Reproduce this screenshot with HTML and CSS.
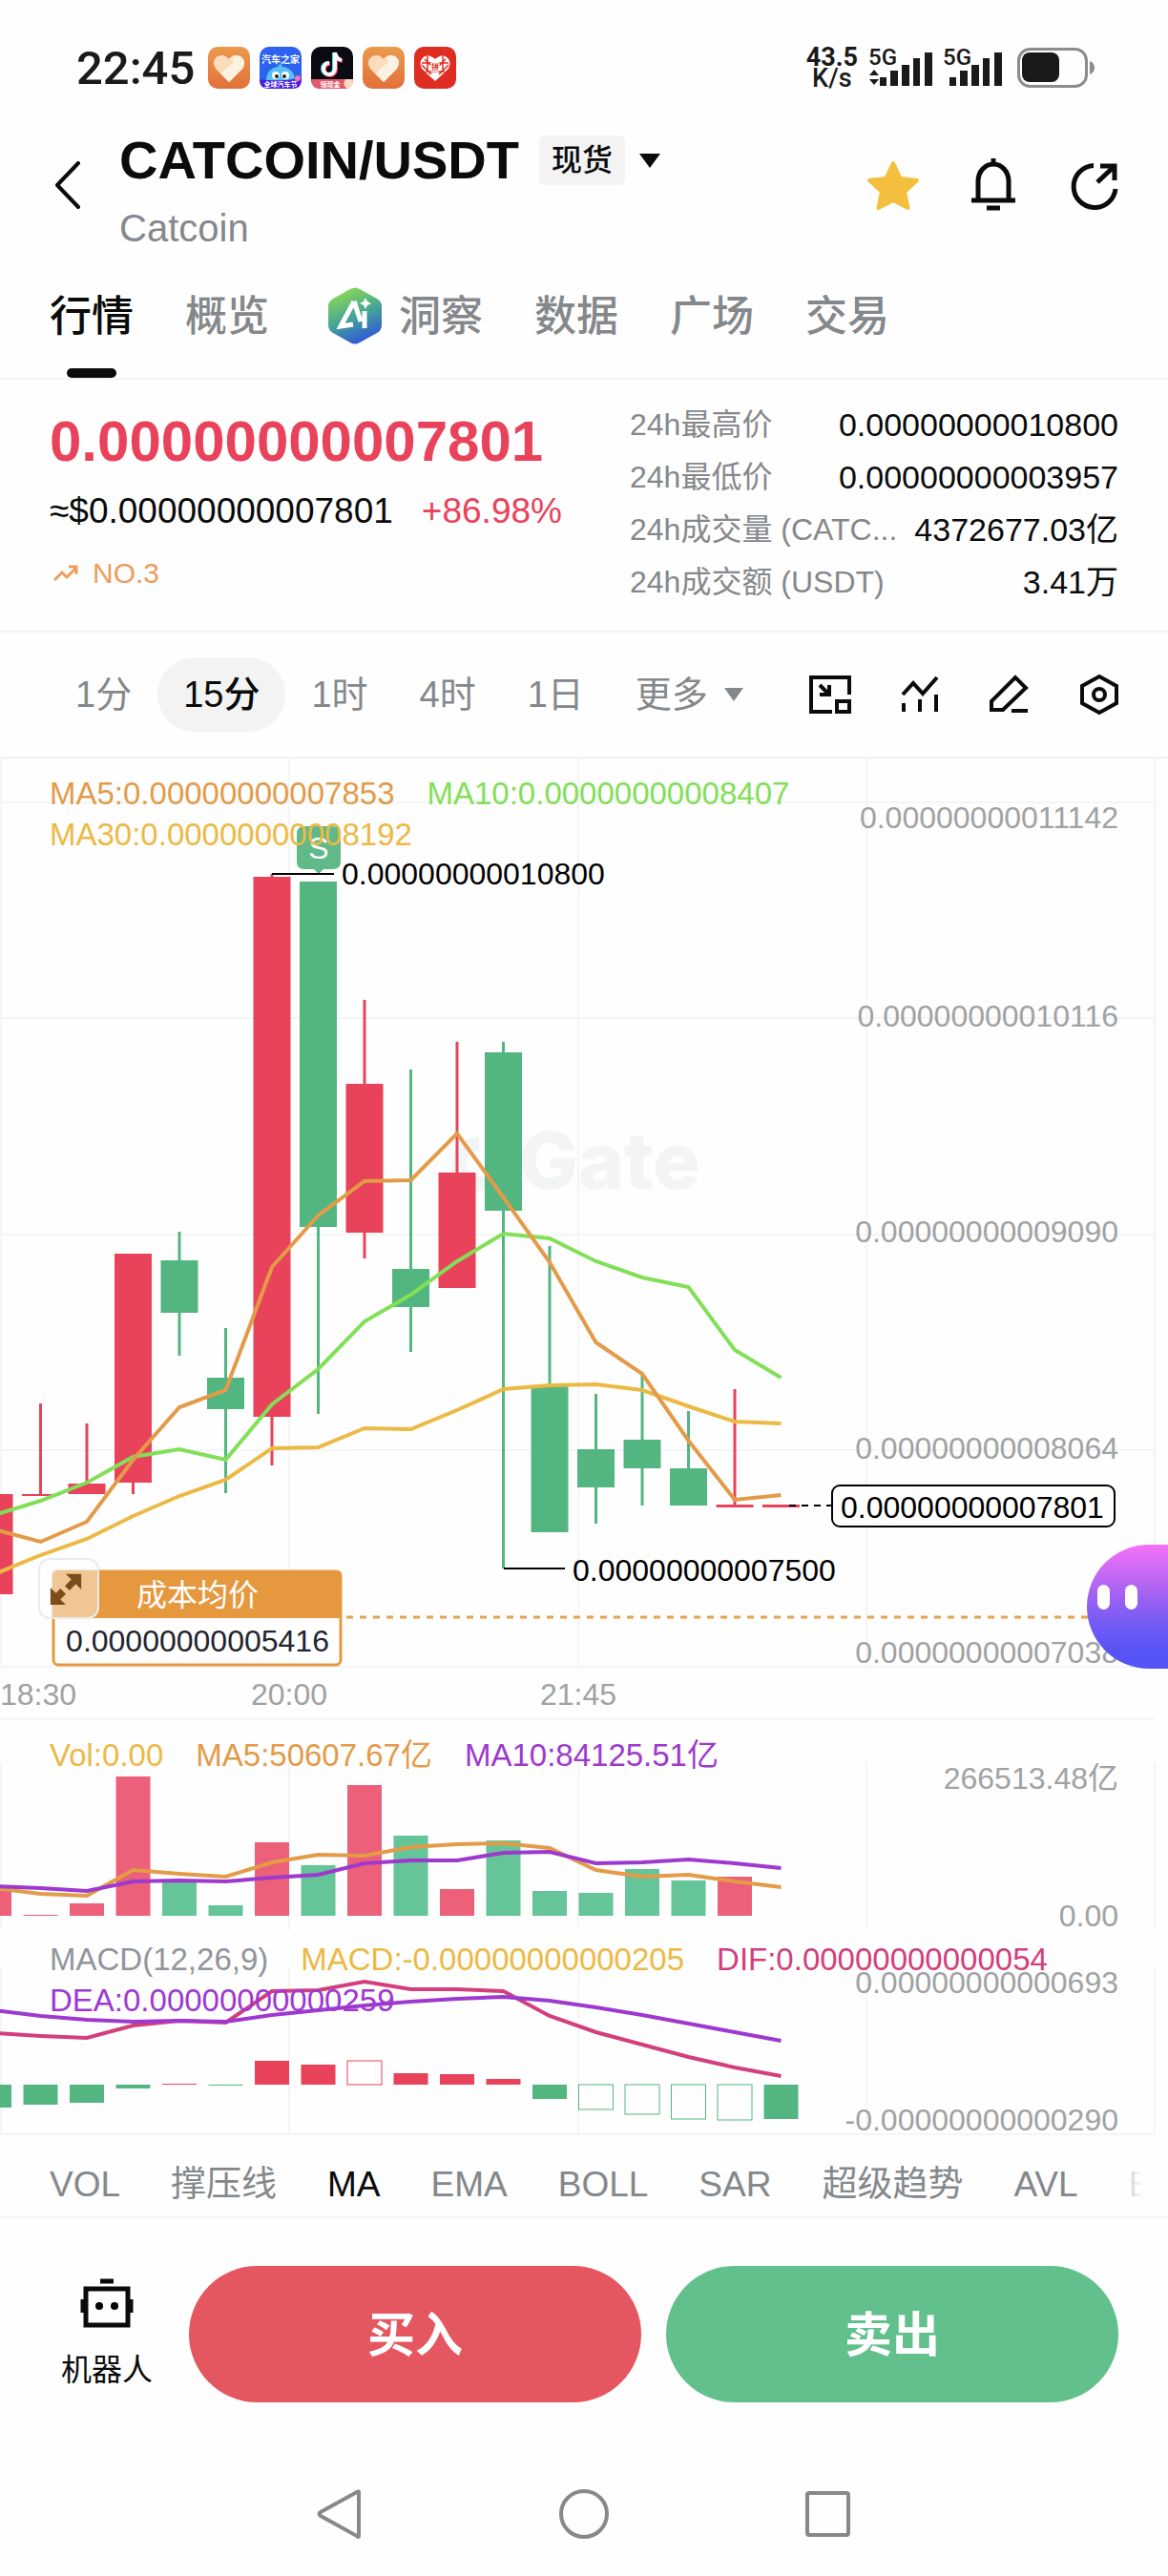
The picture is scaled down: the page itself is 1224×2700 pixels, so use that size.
FILE: index.html
```html
<!DOCTYPE html>
<html lang="zh-CN">
<head>
    <meta charset="UTF-8">
    <meta name="viewport" content="width=device-width, initial-scale=1.0">
    <title>CATCOIN/USDT</title>
    <link rel="stylesheet" href="styles.css">
</head>
<body>

<div class="status-bar">
    <span class="time">22:45</span>
    <div class="app-icons">
        <svg viewBox="0 0 44 44"><use href="#app-heart"/></svg>
        <svg viewBox="0 0 44 44">
            <rect width="44" height="44" rx="10" fill="#2b62ee"/>
            <text x="22" y="17" font-size="10" font-weight="bold" fill="#fff" text-anchor="middle">汽车之家</text>
            <path d="M7 35c0-9 6-13 12-14l3-4 2 4c8 1 13 6 13 14z" fill="#58c0f4"/>
            <circle cx="17" cy="30" r="4" fill="#fff"/><circle cx="27" cy="30" r="4" fill="#fff"/>
            <circle cx="18" cy="31" r="2" fill="#222"/><circle cx="26" cy="31" r="2" fill="#222"/>
            <path d="M0 34q22 4 44-2v3q0 9-10 9H10q-10 0-10-9z" fill="#4a1ee0"/>
            <circle cx="40" cy="33" r="3" fill="#f07aa8"/>
            <text x="22" y="42" font-size="7" font-weight="bold" fill="#fff" text-anchor="middle">全球汽车节</text>
        </svg>
        <svg viewBox="0 0 44 44">
            <rect width="44" height="44" rx="10" fill="#0b0b14"/>
            <g fill="none" stroke-width="4">
                <path d="M24 6v17a6 6 0 1 1-6-6M24 6q1 7 7 8" stroke="#3ce5e3"/>
                <path d="M26 7v17a6 6 0 1 1-6-6M26 7q1 7 7 8" stroke="#f0355c"/>
                <path d="M25 6v17a6 6 0 1 1-6-6M25 6q1 7 7 8" stroke="#fff"/>
            </g>
            <path d="M0 34h44q0 10-10 10H10Q0 44 0 34z" fill="#e2596a"/>
            <path d="M36 34h8q0 8-6 10-6-4-2-10z" fill="#fbd9c0"/>
            <text x="20" y="42" font-size="7" font-weight="bold" fill="#fff" text-anchor="middle">领现金</text>
        </svg>
        <svg viewBox="0 0 44 44"><use href="#app-heart"/></svg>
        <svg viewBox="0 0 44 44">
            <rect width="44" height="44" rx="10" fill="#df2d22"/>
            <path d="M22 36 8 23q-4-8 3-13 6-2 11 3 5-5 11-3 7 5 3 13z" fill="#fff"/>
            <path d="M11 13l9 9M8 19l10 10M33 13l-9 9M36 19 26 29M14 10v16M30 10v16M8 17h28M12 26h20" stroke="#df2d22" stroke-width="1.5"/>
            <text x="22" y="24" font-size="8" font-weight="bold" fill="#df2d22" stroke="#fff" stroke-width="2" paint-order="stroke" text-anchor="middle">拼</text>
        </svg>
    </div>
    <div class="speed"><b>43.5</b><span>K/s</span></div>
    <svg class="signal" viewBox="0 0 68 44">
        <text x="0" y="19">5G</text>
        <path d="M6 24l5 6H1zM6 40l5-6H1z"/>
        <path d="M12 32h7v9h-7zM23 25h8v16h-8zM35 19h8v22h-8zM47 12h7v29h-7zM59 6h8v35h-8z"/>
    </svg>
    <svg class="signal" viewBox="0 0 68 44">
        <text x="0" y="19">5G</text>
        <path d="M7 32h7v9H7zM18 25h8v16h-8zM30 19h8v22h-8zM42 12h7v29h-7zM54 6h8v35h-8z"/>
    </svg>
    <svg class="battery" viewBox="0 0 82 42">
        <rect x="1.5" y="1.5" width="71" height="39" rx="12" fill="none" stroke="#8c8c8c" stroke-width="3"/>
        <rect x="5" y="5" width="39" height="31" rx="8" fill="#1a1a1a"/>
        <path d="M76 14q5 2 5 7t-5 7z" fill="#8c8c8c"/>
    </svg>
</div>

<header class="header">
    <button class="back" aria-label="返回">
        <svg viewBox="0 0 28 50"><path d="M25 2 3 25l22 23" fill="none" stroke="#0a0b0b" stroke-width="4" stroke-linecap="round" stroke-linejoin="round"/></svg>
    </button>
    <div class="pair">
        <div class="pair-row">
            <h1>CATCOIN/USDT</h1>
            <span class="tag">现货</span>
            <svg class="caret" viewBox="0 0 22 15"><path d="M0 0h22L11 15z" fill="#0a0b0b"/></svg>
        </div>
        <p>Catcoin</p>
    </div>
    <div class="header-actions">
        <button aria-label="收藏">
            <svg viewBox="0 0 56 56"><path d="M28 5l7.500 16 17.500 2-13 12 3.500 17L28 44 12.500 52l3.500-17L3 23l17.500-2z" fill="#f4bf3e" stroke="#f4bf3e" stroke-width="4" stroke-linejoin="round"/></svg>
        </button>
        <button aria-label="提醒">
            <svg viewBox="0 0 56 56"><path d="M28 0v6M5 44h46M12 44V24a16 18 0 0 1 32 0v20M21 52h14" fill="none" stroke="#0a0b0b" stroke-width="5"/></svg>
        </button>
        <button aria-label="分享">
            <svg viewBox="0 0 56 56"><path d="M28 7.500A22 22 0 1 0 51 32M32 25 50 8M35 8h15v15" fill="none" stroke="#0a0b0b" stroke-width="5"/></svg>
        </button>
    </div>
</header>

<nav class="tabs">
    <a href="#" class="active">行情</a>
    <a href="#">概览</a>
    <a href="#" class="ai">
        <svg viewBox="0 0 56 60">
            <path d="M23 2q5-3 10 0l18 10q5 3 5 8v20q0 5-5 8L33 58q-5 3-10 0L5 48q-5-3-5-8V20q0-5 5-8z" fill="url(#ai-fill)"/>
            <path d="M27 15 13 41l13-2M27 15l7 21M27 15l2 4M38 25v18" fill="none" stroke="#fff" stroke-width="5"/>
            <path d="M39 11l2 4 4 2-4 2-2 4-2-4-4-2 4-2z" fill="#fff"/>
        </svg>
        洞察
    </a>
    <a href="#">数据</a>
    <a href="#">广场</a>
    <a href="#">交易</a>
</nav>

<section class="summary">
    <div class="price">
        <div class="last">0.00000000007801</div>
        <div class="fiat"><span>≈$0.00000000007801</span><span class="change">+86.98%</span></div>
        <div class="rank">
            <svg viewBox="0 0 26 18"><path d="M1 16l8-8 5 5L24 3M16 2h8v8" fill="none" stroke="#eb9d5b" stroke-width="3"/></svg>
            NO.3
        </div>
    </div>
    <dl class="stats">
        <div><dt>24h最高价</dt><dd>0.00000000010800</dd></div>
        <div><dt>24h最低价</dt><dd>0.00000000003957</dd></div>
        <div><dt>24h成交量 (CATC...</dt><dd>4372677.03亿</dd></div>
        <div><dt>24h成交额 (USDT)</dt><dd>3.41万</dd></div>
    </dl>
</section>

<div class="intervals">
    <button>1分</button>
    <button class="active">15分</button>
    <button>1时</button>
    <button>4时</button>
    <button>1日</button>
    <button class="more">更多 <svg viewBox="0 0 20 14"><path d="M0 0h20L10 14z" fill="#85888b"/></svg></button>
    <div class="tools">
        <button aria-label="小窗"><svg viewBox="0 0 44 44"><path d="M24 40H2V4h40v18M11 12l9 9M21 12v10H11M29 29h13v11H29z"/></svg></button>
        <button aria-label="指标"><svg viewBox="0 0 44 44"><path d="M4 22l11-12 10 11L40 4M5 31v9M22 27v13M39 22v18"/></svg></button>
        <button aria-label="画线"><svg viewBox="0 0 44 44"><path d="M3 38V29L28 4l11 11-24 23zM24 39h17"/></svg></button>
        <button aria-label="设置"><svg viewBox="0 0 44 44"><path d="M22 3l18 10v18L22 41 4 31V13z"/><circle cx="22" cy="22" r="6"/></svg></button>
    </div>
</div>

<main>
    <section class="panel">
        <svg id="kline" viewBox="0 0 1224 1008">
            <path class="grid" d="M0 46h1210M0 272h1210M0 499h1210M0 725h1210M0 952h1210M0 1007h1210M1 0v952M303 0v952M606 0v952M908 0v952M1210 0v952"/>
            <g class="watermark">
                <path d="M502 404a21 21 0 1 0 21 21" fill="none" stroke-width="15"/>
                <path d="M510 397h20v20h-20z" stroke="none"/>
                <text x="544" y="451">Gate</text>
            </g>
            <g id="candles"></g>
            <g id="kline-ma"></g>
            <g class="axis">
                <text x="1172" y="73">0.00000000011142</text>
                <text x="1172" y="281">0.00000000010116</text>
                <text x="1172" y="507">0.00000000009090</text>
                <text x="1172" y="734">0.00000000008064</text>
                <text x="1172" y="948">0.00000000007038</text>
            </g>
            <g class="axis times">
                <text x="40" y="992">18:30</text>
                <text x="303" y="992">20:00</text>
                <text x="606" y="992">21:45</text>
            </g>

            <!-- Höchst- und Tiefstkurs -->
            <g class="sell-mark">
                <path d="M319 71h30q8 0 8 8v29q0 8-8 8h-10l-5 5-5-5h-10q-8 0-8-8V79q0-8 8-8z"/>
                <text x="334" y="105">S</text>
            </g>
            <path class="pointer" d="M285 121h65M528 849h64"/>
            <text x="358" y="132">0.00000000010800</text>
            <text x="600" y="862">0.00000000007500</text>

            <!-- aktueller Kurs -->
            <path class="pointer" d="M827 783h45" stroke-dasharray="7 6"/>
            <rect x="872" y="762" width="296" height="43" rx="8" fill="#fff" stroke="#000" stroke-width="2"/>
            <text x="881" y="796">0.00000000007801</text>

            <!-- Durchschnittskosten -->
            <path d="M363 900h790" stroke="#e3a154" stroke-width="3" stroke-dasharray="7 7"/>
            <rect x="56" y="852" width="301" height="98" rx="5" fill="#fff" stroke="#e6983f" stroke-width="3"/>
            <path d="M55 901v-45q0-5 5-5h293q5 0 5 5v45z" fill="#e6983f"/>
            <text class="cost-title" x="207" y="888">成本均价</text>
            <text class="cost-value" x="207" y="936">0.00000000005416</text>
        </svg>
        <div class="legend">
            <span class="orange">MA5:0.00000000007853</span>
            <span class="green">MA10:0.00000000008407</span>
            <span class="yellow">MA30:0.00000000008192</span>
        </div>
        <button class="expand" aria-label="全屏">
            <svg viewBox="0 0 40 40"><path d="M20 4h17v17l-6-6-7 7-5-5 7-7zM3 19l6 6 5-5 6 6-6 6 6 6H3z" fill="#7a4d1a"/></svg>
        </button>
        <button class="assistant" aria-label="助手"><i></i><i></i></button>
    </section>

    <section class="panel">
        <svg id="volume" viewBox="0 0 1224 220">
            <path class="grid" d="M1 45v175M303 45v175M606 45v175M908 45v175M1210 45v175"/>
            <g id="vol-bars"></g>
            <g id="vol-ma"></g>
            <g class="axis">
                <text x="1172" y="72">266513.48亿</text>
                <text x="1172" y="216">0.00</text>
            </g>
        </svg>
        <div class="legend">
            <span class="yellow">Vol:0.00</span>
            <span class="orange">MA5:50607.67亿</span>
            <span class="purple">MA10:84125.51亿</span>
        </div>
    </section>

    <section class="panel macd">
        <svg id="macd" viewBox="0 0 1224 215">
            <path class="grid" d="M0 214h1210M1 39v175M303 39v175M606 39v175M908 39v175M1210 39v175"/>
            <g id="macd-bars"></g>
            <g id="macd-lines"></g>
            <g class="axis">
                <text x="1172" y="66">0.00000000000693</text>
                <text x="1172" y="210">-0.00000000000290</text>
            </g>
        </svg>
        <div class="legend">
            <span class="gray">MACD(12,26,9)</span>
            <span class="yellow">MACD:-0.00000000000205</span>
            <span class="pink">DIF:0.00000000000054</span>
            <span class="purple">DEA:0.00000000000259</span>
        </div>
    </section>
</main>

<div class="indicators">
    <button>VOL</button>
    <button>撑压线</button>
    <button class="active">MA</button>
    <button>EMA</button>
    <button>BOLL</button>
    <button>SAR</button>
    <button>超级趋势</button>
    <button>AVL</button>
    <button>E</button>
</div>

<footer class="actions">
    <button class="robot">
        <svg viewBox="0 0 56 52"><path d="M21 3h14M6 11h44v38H6zM3 22v14M53 22v14" fill="none" stroke="#0a0b0b" stroke-width="5"/><circle cx="20" cy="29" r="4"/><circle cx="36" cy="29" r="4"/></svg>
        机器人
    </button>
    <button class="buy">买入</button>
    <button class="sell">卖出</button>
</footer>

<div class="system-nav">
    <button aria-label="返回"><svg viewBox="0 0 52 52"><path d="M45 3v46q0 2-2 0L5 28q-3-2 0-4L43 3q2-1 2 0z"/></svg></button>
    <button aria-label="主屏幕"><svg viewBox="0 0 52 52"><circle cx="26" cy="26" r="24"/></svg></button>
    <button aria-label="最近任务"><svg viewBox="0 0 52 52"><rect x="5" y="4" width="43" height="44" rx="2"/></svg></button>
</div>

<svg class="defs" width="0" height="0">
    <defs>
        <linearGradient id="heart-bg" x1="0" y1="0" x2="0" y2="1"><stop offset="0" stop-color="#eb9a4c"/><stop offset="1" stop-color="#e2703a"/></linearGradient>
        <linearGradient id="ai-fill" x1="0.300" y1="0" x2="0.700" y2="1"><stop offset="0" stop-color="#8fdc50"/><stop offset="0.500" stop-color="#45a596"/><stop offset="1" stop-color="#2c50e0"/></linearGradient>
        <symbol id="app-heart" viewBox="0 0 44 44">
            <rect width="44" height="44" rx="10" fill="url(#heart-bg)"/>
            <path d="M22 37 8 23q-5-8 2-13 7-3 12 3 5-6 12-3 7 5 2 13z" fill="#fbdcbc"/>
            <path d="M22 37 13 28 26 17q3-6-4-4 5-6 12-3 7 5 2 13z" fill="#fdf1e2"/>
        </symbol>
    </defs>
</svg>

<script src="script.js"></script>
</body>
</html>
```
FILE: styles.css
```css
* {
    box-sizing: border-box;
}

body {
    margin: 0;
    background: #fefefe;
    color: #0a0b0b;
    font-family: "Liberation Sans", "Noto Sans CJK SC", sans-serif;
}

button {
    margin: 0;
    padding: 0;
    border: 0;
    background: none;
    color: inherit;
    font: inherit;
    cursor: pointer;
}

svg {
    display: block;
}

.defs {
    position: absolute;
}

/* Statusleiste */
.status-bar {
    display: flex;
    align-items: center;
    height: 142px;
    padding: 0 76px 0 80px;
    font-family: Roboto, "Noto Sans CJK SC", sans-serif;
    color: #1a1a1a;
}

.time {
    font-size: 49px;
    font-weight: 500;
}

.app-icons {
    display: flex;
    gap: 10px;
    margin-left: 14px;
}

.app-icons svg {
    width: 44px;
    height: 44px;
}

.speed {
    display: flex;
    flex-direction: column;
    align-items: center;
    margin-left: auto;
    margin-right: 11px;
    font-size: 27px;
    line-height: 22px;
    font-weight: 500;
}

.signal {
    width: 68px;
    height: 44px;
    margin-right: 10px;
    overflow: visible;
    fill: #1a1a1a;
}

.signal text {
    font-size: 24px;
    font-weight: 500;
}

.battery {
    width: 82px;
    height: 42px;
}

/* Kopfzeile */
.header {
    display: flex;
    align-items: flex-start;
    padding: 0 50px 0 52px;
}

.back {
    margin: 27px 40px 0 5px;
}

.back svg {
    width: 28px;
    height: 50px;
}

.pair-row {
    display: flex;
    align-items: center;
    height: 52px;
}

.pair h1 {
    margin: 0;
    font-size: 56px;
    line-height: 52px;
}

.tag {
    margin-left: 21px;
    padding: 0 13px;
    border-radius: 6px;
    background: #f3f3f4;
    font-size: 32px;
    font-weight: 500;
    line-height: 52px;
}

.caret {
    width: 22px;
    height: 15px;
    margin-left: 15px;
}

.pair p {
    margin: 23px 0 0;
    color: #85888b;
    font-size: 40px;
    line-height: 44px;
}

.header-actions {
    display: flex;
    gap: 49px;
    margin: 24px 0 0 auto;
}

.header-actions svg {
    width: 56px;
    height: 56px;
}

/* Reiter */
.tabs {
    display: flex;
    gap: 54px;
    padding: 40px 52px 35px;
    border-bottom: 2px solid #f1f2f3;
}

.tabs a {
    display: flex;
    position: relative;
    height: 60px;
    color: #85888b;
    font-size: 44px;
    font-weight: 500;
    line-height: 62px;
    text-decoration: none;
}

.tabs .active {
    color: #0a0b0b;
}

.tabs .active::after {
    content: "";
    position: absolute;
    left: 18px;
    bottom: -35px;
    width: 52px;
    height: 10px;
    border-radius: 5px;
    background: #0a0b0b;
}

.tabs .ai {
    gap: 18px;
    padding-left: 8px;
}

.ai svg {
    width: 56px;
    height: 60px;
}

/* Kursübersicht */
.summary {
    display: grid;
    grid-template-columns: 1fr 512px;
    padding: 20px 52px 23px;
    border-bottom: 2px solid #f1f2f3;
}

.price {
    padding-top: 9px;
}

.last {
    color: #e9435b;
    font-size: 60px;
    font-weight: bold;
    line-height: 72px;
}

.fiat {
    display: flex;
    gap: 30px;
    margin-top: 11px;
    font-size: 37px;
    line-height: 52px;
}

.change {
    color: #e9435b;
}

.rank {
    display: flex;
    align-items: center;
    gap: 15px;
    margin-top: 19px;
    padding-left: 4px;
    color: #eb9d5b;
    font-size: 30px;
    line-height: 40px;
}

.rank svg {
    width: 26px;
    height: 18px;
}

.stats {
    margin: 0;
}

.stats div {
    display: flex;
    justify-content: space-between;
    font-size: 32px;
    line-height: 55px;
    white-space: nowrap;
}

.stats dt {
    color: #85888b;
}

.stats dd {
    margin: 0;
    font-size: 34px;
}

/* Zeitintervalle */
.intervals {
    display: flex;
    align-items: center;
    height: 132px;
    padding: 0 50px 0 52px;
    border-bottom: 2px solid #f1f2f3;
    color: #85888b;
    font-size: 38px;
}

.intervals > button {
    padding: 0 27px;
    line-height: 78px;
}

.intervals .active {
    border-radius: 39px;
    background: #f3f3f4;
    color: #0a0b0b;
    font-weight: 500;
}

.intervals .more {
    display: flex;
    align-items: center;
    gap: 17px;
}

.more svg {
    width: 20px;
    height: 14px;
}

.tools {
    display: flex;
    gap: 50px;
    margin-left: auto;
}

.tools svg {
    width: 44px;
    height: 44px;
    fill: none;
    stroke: #0a0b0b;
    stroke-width: 4;
}

/* Diagramme */
.panel {
    position: relative;
    overflow: hidden;
}

.panel > svg {
    width: 100%;
    height: auto;
    font-size: 32px;
}

.legend {
    position: absolute;
    top: 15px;
    left: 0;
    right: 0;
    display: flex;
    flex-wrap: wrap;
    column-gap: 34px;
    padding: 0 52px;
    font-size: 33px;
    line-height: 43px;
    pointer-events: none;
}

.macd .legend {
    top: 9px;
}

.orange { color: #e39b48; }
.green { color: #82df57; }
.yellow { color: #ecb944; }
.purple { color: #9e39cf; }
.pink { color: #d23f7c; }
.gray { color: #90959c; }

.grid {
    fill: none;
    stroke: #f3f5f6;
    stroke-width: 2;
}

.axis {
    fill: #a0a2a3;
    text-anchor: end;
}

.times {
    text-anchor: middle;
}

.watermark {
    fill: #f3f4f5;
    stroke: #f3f4f5;
    font-family: Inter, sans-serif;
    font-size: 82px;
    font-weight: 800;
}

.watermark text {
    stroke: none;
}

.up { fill: #e9435b; stroke: #e9435b; }
.down { fill: #53b681; stroke: #53b681; }
.vol-up { fill: #ec6079; }
.vol-down { fill: #65c498; }
.hollow { fill: none; stroke-width: 1; }
.solid { stroke: none; }

.wick {
    stroke-width: 3;
}

.line {
    fill: none;
    stroke: currentColor;
    stroke-width: 4;
}

.pointer {
    stroke: #000;
    stroke-width: 2;
}

.sell-mark {
    fill: #61b98a;
}

.sell-mark text {
    fill: #fff;
    text-anchor: middle;
}

.cost-title {
    fill: #fff;
    text-anchor: middle;
}

.cost-value {
    fill: #22252f;
    text-anchor: middle;
}

.expand {
    position: absolute;
    left: 40px;
    top: 838px;
    width: 64px;
    height: 64px;
    padding: 8px;
    border: 2px solid #ececec;
    border-radius: 12px;
    background: rgba(255, 255, 255, 0.45);
}

.expand svg {
    width: 38px;
    height: 38px;
}

.assistant {
    position: absolute;
    right: 0;
    top: 824px;
    display: flex;
    gap: 16px;
    width: 85px;
    height: 130px;
    padding: 42px 0 0 11px;
    border-radius: 65px 0 0 65px;
    background: linear-gradient(#f472f8, #a462f2 40%, #7a5cf5 60%, #5754f5 85%);
}

.assistant i {
    width: 13px;
    height: 26px;
    border-radius: 7px;
    background: #fff;
}

/* Indikatoren */
.indicators {
    display: flex;
    gap: 53px;
    padding: 0 24px 0 52px;
    overflow: hidden;
    border-bottom: 2px solid #f1f2f3;
    color: #85888b;
    font-size: 37px;
    line-height: 103px;
    height: 87px;
    white-space: nowrap;
}

.indicators .active {
    color: #0a0b0b;
}

.indicators button {
    flex: none;
}

.indicators button:last-child {
    background: linear-gradient(90deg, #d0d1d2, #fefefe 60%);
    background-clip: text;
    color: transparent;
}

/* Kaufen und Verkaufen */
.actions {
    display: flex;
    gap: 26px;
    padding: 50px 52px 0;
}

.robot {
    display: flex;
    flex-direction: column;
    align-items: center;
    justify-content: center;
    gap: 20px;
    width: 120px;
    padding-top: 2px;
    font-size: 32px;
    line-height: 48px;
}

.robot svg {
    width: 56px;
    height: 52px;
}

.buy,
.sell {
    flex: 1;
    height: 143px;
    padding-bottom: 8px;
    border-radius: 72px;
    color: #fff;
    font-size: 50px;
    font-weight: bold;
}

.buy {
    background: #e55760;
}

.sell {
    background: #62c08c;
}

/* Systemnavigation */
.system-nav {
    display: flex;
    justify-content: center;
    gap: 203px;
    padding: 91px 0 39px;
}

.system-nav svg {
    width: 52px;
    height: 52px;
    fill: none;
    stroke: #888;
    stroke-width: 4;
}
```
FILE: script.js
```js
const NS = 'http://www.w3.org/2000/svg';
const FIRST_X = -6;
const STEP = 48.5;

// [Farbe, Hoch, Körper oben, Körper unten, Tief]
const candles = [
    ['up', 771, 771, 876, 876],
    ['up', 676, 771, 773, 773],
    ['up', 697, 760, 771, 771],
    ['up', 519, 519, 759, 771],
    ['down', 496, 526, 581, 626],
    ['down', 597, 649, 682, 770],
    ['up', 121, 124, 690, 741],
    ['down', 129, 129, 491, 687],
    ['up', 253, 341, 497, 524],
    ['down', 326, 535, 575, 622],
    ['up', 297, 434, 555, 555],
    ['down', 297, 308, 474, 849],
    ['down', 511, 657, 811, 811],
    ['down', 666, 724, 764, 802],
    ['down', 645, 714, 744, 783],
    ['down', 684, 744, 783, 783],
    ['up', 661, 782, 785, 785],
    ['up', 782, 782, 785, 785]
];

const volumes = [26, 1, 13, 146, 35, 11, 77, 53, 137, 84, 28, 79, 26, 24, 49, 37, 41];

const macd = [-24, -21, -19, -4, 1, -1, 25, 21, 25, 12, 11, 6, -15, -26, -31, -36, -37, -36];
const hollow = [8, 13, 14, 15, 16];

const lines = {
    'kline-ma': {
        yellow: [855, 835, 818, 794, 773, 756, 723, 722, 702, 703, 683, 661, 657, 656, 662, 679, 695, 697],
        green: [793, 778, 759, 732, 724, 735, 677, 640, 590, 562, 527, 498, 503, 527, 544, 554, 620, 649],
        orange: [808, 821, 800, 735, 680, 662, 533, 479, 443, 442, 393, 460, 528, 612, 645, 715, 777, 772]
    },
    'vol-ma': {
        orange: [176, 182, 184, 157, 161, 164, 149, 141, 142, 133, 130, 129, 134, 157, 164, 162, 169, 175],
        purple: [174, 176, 179, 169, 168, 169, 165, 162, 150, 147, 147, 139, 138, 150, 149, 146, 150, 155]
    },
    'macd-lines': {
        pink: [108, 111, 113, 100, 95, 97, 64, 63, 54, 62, 62, 64, 90, 107, 120, 133, 144, 153],
        purple: [84, 90, 94, 96, 95, 96, 89, 84, 79, 75, 72, 70, 74, 81, 89, 98, 107, 116]
    }
};

function xOf(i) {
    return FIRST_X + STEP * i;
}

function add(id, tag, attrs) {
    const el = document.createElementNS(NS, tag);
    for (const key in attrs) {
        el.setAttribute(key, attrs[key]);
    }
    document.getElementById(id).appendChild(el);
}

function addBar(id, cls, i, width, top, height) {
    add(id, 'rect', { class: cls, x: xOf(i) - width / 2, y: top, width: width, height: height });
}

candles.forEach(([dir, high, top, bottom, low], i) => {
    add('candles', 'path', { class: `wick ${dir}`, d: `M${xOf(i)} ${high}V${low}` });
    addBar('candles', `${dir} solid`, i, 39, top, bottom - top);
});

volumes.forEach((v, i) => {
    addBar('vol-bars', `vol-${candles[i][0]}`, i, 36, 205 - v, v);
});

macd.forEach((v, i) => {
    const cls = (v > 0 ? 'up ' : 'down ') + (hollow.includes(i) ? 'hollow' : 'solid');
    addBar('macd-bars', cls, i, 36, v > 0 ? 162 - v : 162, Math.abs(v));
});

// .hollow muss nach .up/.down stehen, sonst wird die Füllung überschrieben
for (const id in lines) {
    for (const color in lines[id]) {
        const points = lines[id][color].map((y, i) => `${xOf(i)},${y}`).join(' ');
        add(id, 'polyline', { class: `line ${color}`, points: points });
    }
}
```
